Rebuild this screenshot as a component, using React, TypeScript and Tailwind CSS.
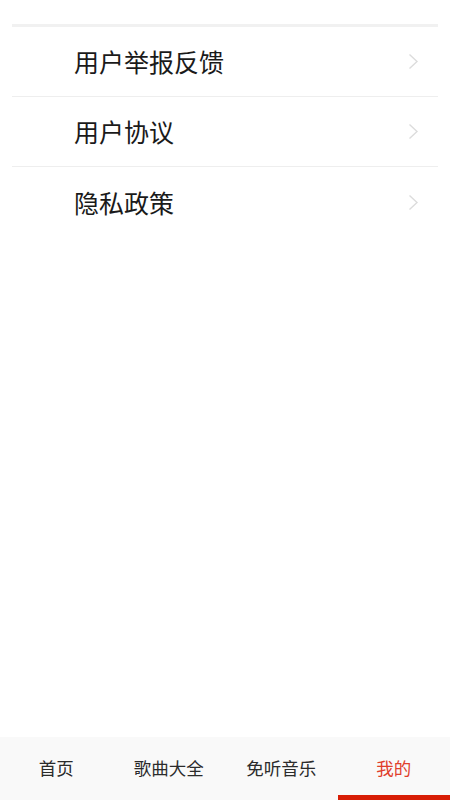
import React from "react"

type Row = {
  label: string
}

const rows: Row[] = [
  { label: "用户举报反馈" },
  { label: "用户协议" },
  { label: "隐私政策" },
]

const tabs = ["首页", "歌曲大全", "免听音乐", "我的"]

const Chevron = () => (
  <svg width="11" height="17" viewBox="0 0 11 17" fill="none">
    <path d="M1.5 1.5L9 8.5L1.5 15.5" stroke="#dcdcdc" strokeWidth="1.4" />
  </svg>
)

const App = () => {
  const active = 3

  return (
    <div
      className="flex h-[800px] w-[450px] flex-col bg-white"
      style={{ fontFamily: '"Noto Sans CJK SC", "Noto Sans", sans-serif' }}
    >
      <div className="flex-1 px-3 pt-6">
        <div className="border-t-[3px] border-[#f1f1f1]">
          {rows.map((r, i) => (
            <div
              key={r.label}
              className={
                "flex h-[70px] items-center justify-between pl-[62px] pr-[19px] " +
                (i < rows.length - 1 ? "border-b border-[#eeeeee]" : "")
              }
            >
              <span className="text-[25px] leading-none text-[#1a1a1a]">
                {r.label}
              </span>
              <Chevron />
            </div>
          ))}
        </div>
      </div>
      <nav className="grid h-[63px] grid-cols-4 bg-[#f9f9f9]">
        {tabs.map((t, i) => (
          <div key={t} className="relative flex items-center justify-center">
            <span
              className={
                "text-[17.5px] " +
                (i === active ? "text-[#e0402c]" : "text-[#2b2b2b]")
              }
            >
              {t}
            </span>
            {i === active && (
              <div className="absolute bottom-0 left-0 right-0 h-[5px] bg-[#d81e06]" />
            )}
          </div>
        ))}
      </nav>
    </div>
  )
}

export default App
